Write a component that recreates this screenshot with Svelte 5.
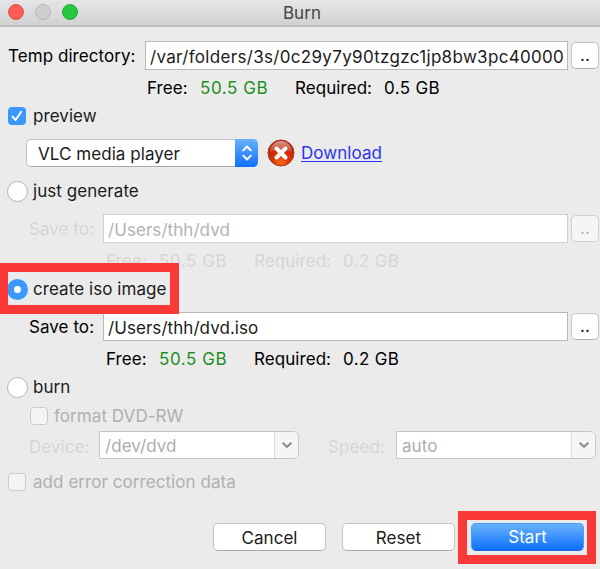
<script>
  let tempDir = $state("/var/folders/3s/0c29y7y90tzgzc1jp8bw3pc40000");
  let folder = $state("/Users/thh/dvd");
  let isoFile = $state("/Users/thh/dvd.iso");
  let mode = $state("iso");
  let preview = $state(true);

  const device = "/dev/dvd";
  const speed = "auto";
</script>

{#snippet space(required)}
  <span class="free">Free:</span>
  <span class="size green">50.5 GB</span>
  <span class="required">Required:</span>
  <span class="size">{required}</span>
{/snippet}

{#snippet radio(value, label)}
  <button class="option" onclick={() => (mode = value)}>
    <span class="radio" class:on={mode === value}></span>
    <span class="text">{label}</span>
  </button>
{/snippet}

{#snippet combo(value)}
  <div class="combo">
    <span class="combo-value">{value}</span>
    <span class="combo-arrow">
      <svg width="12" height="8" viewBox="0 0 12 8">
        <path d="M1.6 1.8 L6 5.8 L10.4 1.8" fill="none" stroke="#8b8b8b" stroke-width="2.1" />
      </svg>
    </span>
  </div>
{/snippet}

<div class="window">
  <header class="titlebar">
    <div class="lights">
      <span class="light red"></span>
      <span class="light idle"></span>
      <span class="light go"></span>
    </div>
    <span class="title">Burn</span>
  </header>

  <div class="row temp">
    <span class="label">Temp directory:</span>
    <input class="path" bind:value={tempDir} />
    <button class="browse">..</button>
  </div>
  <div class="row info temp-info">{@render space("0.5 GB")}</div>

  <div class="row preview">
    <button class="option" onclick={() => (preview = !preview)}>
      <span class="check" class:on={preview}>
        {#if preview}
          <svg width="18" height="18" viewBox="0 0 18 18">
            <path d="M4.6 9.6 L7.6 13 L13.2 4.8" fill="none" stroke="#fff" stroke-width="2" stroke-linecap="round" stroke-linejoin="round" />
          </svg>
        {/if}
      </span>
      <span class="text">preview</span>
    </button>
  </div>

  <div class="row player">
    <div class="select">
      <span class="select-value">VLC media player</span>
      <span class="stepper">
        <svg width="12" height="18" viewBox="0 0 12 18">
          <path d="M2.2 6.3 L6 2.5 L9.8 6.3 M2.2 11.7 L6 15.5 L9.8 11.7" fill="none" stroke="#fff" stroke-width="1.9" stroke-linecap="round" stroke-linejoin="round" />
        </svg>
      </span>
    </div>
    <svg class="missing" width="28" height="28" viewBox="0 0 28 28">
      <defs>
        <radialGradient id="ball" cx="50%" cy="90%" r="85%">
          <stop offset="0" stop-color="#ff6a1c" />
          <stop offset="0.4" stop-color="#dc3506" />
          <stop offset="1" stop-color="#ad1c05" />
        </radialGradient>
        <linearGradient id="gloss" x1="0" y1="0" x2="0" y2="1">
          <stop offset="0" stop-color="#fff" stop-opacity="0.55" />
          <stop offset="1" stop-color="#fff" stop-opacity="0.12" />
        </linearGradient>
      </defs>
      <circle cx="14" cy="14" r="13" fill="url(#ball)" stroke="#a03c22" stroke-width="1" />
      <path d="M3 13 A11 11 0 0 1 25 13 Q14 9 3 13 Z" fill="url(#gloss)" />
      <path d="M9.5 9.5 L18.5 18.5 M18.5 9.5 L9.5 18.5" stroke="#fff" stroke-width="4" stroke-linecap="round" />
    </svg>
    <a class="download" href="#download">Download</a>
  </div>

  <div class="row choice">{@render radio("generate", "just generate")}</div>
  <div class="row save disabled">
    <span class="label">Save to:</span>
    <input class="path" bind:value={folder} disabled />
    <button class="browse" disabled>..</button>
  </div>
  <div class="row info faded">{@render space("0.2 GB")}</div>

  <div class="row create">
    {@render radio("iso", "create iso image")}
    <span class="mark"></span>
  </div>
  <div class="row save-iso">
    <span class="label">Save to:</span>
    <input class="path" bind:value={isoFile} />
    <button class="browse">..</button>
  </div>
  <div class="row info iso-info">{@render space("0.2 GB")}</div>

  <div class="row choice">{@render radio("burn", "burn")}</div>
  <div class="row format">
    <span class="check off"></span>
    <span class="text">format DVD-RW</span>
  </div>
  <div class="row drive">
    <span class="label device">Device:</span>
    {@render combo(device)}
    <span class="label speed">Speed:</span>
    {@render combo(speed)}
  </div>
  <div class="row correction">
    <span class="check off"></span>
    <span class="text">add error correction data</span>
  </div>

  <footer class="row actions">
    <button class="push">Cancel</button>
    <button class="push">Reset</button>
    <div class="framed"><button class="push primary">Start</button></div>
  </footer>
</div>

<style>
  :global(body) { background: #ebebeb; overflow: hidden; }
  .window {
    width: 600px;
    height: 569px;
    box-sizing: border-box;
    overflow: hidden;
    background: #ebebeb;
    color: #1b1b1b;
    font: 17px/20px Inter, "Liberation Sans", sans-serif;
    letter-spacing: 0.06px;
    white-space: nowrap;
  }
  .window * { box-sizing: border-box; }
  button, input { font: inherit; color: inherit; letter-spacing: inherit; margin: 0; }
  .titlebar {
    position: relative;
    height: 27px;
    display: flex;
    justify-content: center;
    background: linear-gradient(#e6e6e6, #d1d1d1);
    border-bottom: 2px solid #bdbdbd;
  }
  .lights { position: absolute; left: 8px; top: 4px; display: flex; gap: 11px; }
  .light { width: 16px; height: 16px; border-radius: 50%; border: 1px solid; }
  .light.red { background: #fc5b57; border-color: #e2504c; }
  .light.idle { background: #cfcfcf; border-color: #b9b9b9; }
  .light.go { background: #27c83f; border-color: #22ae36; }
  .title { color: #444; line-height: 27px; margin-left: 4px; }

  .row { display: flex; align-items: center; }
  .label { flex: none; width: 74px; color: #000; padding-top: 1px; }
  .path {
    width: 465px;
    height: 29px;
    padding: 3px 4px 0;
    background: #fff;
    border: 1px solid #b9b9b9;
    border-radius: 0;
    outline: none;
  }
  .browse {
    width: 28px;
    height: 27px;
    margin-left: 3px;
    padding: 0;
    background: #fff;
    border: 1px solid #c4c4c4;
    border-bottom-color: #adadad;
    border-radius: 5px;
  }
  .temp { height: 30px; margin-top: 13px; padding-left: 8px; }
  .temp .label { width: 137px; }
  .temp .path { width: 423px; letter-spacing: 0.32px; }

  .info { height: 14px; padding-left: 106px; color: #000; }
  .free { width: 53px; }
  .size { width: 95px; letter-spacing: 0.35px; }
  .required { width: 89px; }
  .size.green { color: #1c8f22; letter-spacing: 0.55px; }
  .temp-info { height: 36px; padding-left: 147px; }
  .iso-info { height: 34px; }
  .faded, .faded .size.green { color: #d6d6d6; }

  .option { display: flex; align-items: center; padding: 0; border: 0; background: none; }
  .check {
    display: flex;
    flex: none;
    width: 18px;
    height: 18px;
    border: 1px solid #bbb;
    border-radius: 4px;
    background: #fff;
  }
  .check.on { background: #3b99fc; border: 0; }
  .check.off { background: #f4f4f4; border-color: #cbcbcb; }
  .check + .text { margin-left: 7px; }
  .preview { height: 20px; padding-left: 8px; }
  .player { height: 54px; padding-left: 26px; }
  .select {
    display: flex;
    width: 232px;
    height: 28px;
    background: #fff;
    border: 1px solid #c2c2c2;
    border-bottom-color: #a9a9a9;
    border-right: 0;
    border-radius: 5px;
  }
  .select-value { flex: 1; padding-left: 11px; line-height: 28px; }
  .stepper {
    display: flex;
    align-items: center;
    justify-content: center;
    width: 23px;
    margin: -1px 0;
    border-radius: 0 5px 5px 0;
    background: linear-gradient(#68b1fa, #0f70fb);
  }
  .missing { margin-left: 9px; }
  .download { margin-left: 6px; color: #2a33f0; text-underline-offset: 2px; text-decoration-thickness: 1px; }

  .radio {
    width: 21px;
    height: 21px;
    margin-right: 5px;
    background: #fff;
    border: 1px solid #b4b4b4;
    border-radius: 50%;
  }
  .radio.on { background: #fff; border: 7px solid #3b99fc; }
  .choice { height: 22px; padding-left: 7px; }
  .save { height: 52px; padding-left: 29px; }
  .disabled .label { color: #d6d6d6; }
  .disabled .path { color: #b2b2b2; border-color: #cfcfcf; }
  .disabled .browse { color: #b9b9b9; background: #f5f5f5; border-color: #d0d0d0; }
  .create { position: relative; height: 42px; padding-left: 7px; }
  /* red highlight drawn over the window */
  .mark {
    position: absolute;
    left: 0;
    top: -5px;
    width: 179px;
    height: 51px;
    border: 9px solid #fb3838;
    border-left-width: 8px;
    pointer-events: none;
  }
  .save-iso { height: 32px; padding-left: 29px; }

  .format { height: 36px; padding-left: 30px; color: #b0b0b0; }
  .format .text { margin-left: 6px; }
  .drive { height: 22px; padding-left: 29px; }
  .drive .label { width: 70px; color: #d6d6d6; padding-top: 4px; }
  .drive .speed { width: 68px; margin-left: 29px; }
  .combo {
    display: flex;
    width: 200px;
    height: 28px;
    background: #fff;
    border: 1px solid #c6c6c6;
    border-radius: 0 6px 6px 0;
    color: #adadad;
  }
  .combo-value { flex: 1; padding-left: 5px; line-height: 28px; }
  .combo-arrow {
    display: flex;
    align-items: center;
    justify-content: center;
    width: 24px;
    background: #f5f5f5;
    border-left: 1px solid #ddd;
    border-radius: 0 5px 5px 0;
  }
  .correction { height: 52px; padding-left: 8px; color: #b0b0b0; }
  .actions { height: 58px; padding-left: 213px; }
  .push {
    width: 113px;
    height: 28px;
    margin-right: 16px;
    padding: 1px 0 0;
    background: #fff;
    border: 1px solid #c4c4c4;
    border-bottom-color: #a8a8a8;
    border-radius: 5px;
  }
  .framed {
    width: 138px;
    height: 53px;
    margin-left: -13px;
    padding: 3px 0 0 4px;
    border: 9px solid #fb3838;
  }
  .primary {
    display: block;
    margin: 0;
    color: #fff;
    border-color: #4a9bf5;
    border-bottom-color: #1a68e0;
    background: linear-gradient(#69b2fa, #0d6ffc);
  }
</style>
